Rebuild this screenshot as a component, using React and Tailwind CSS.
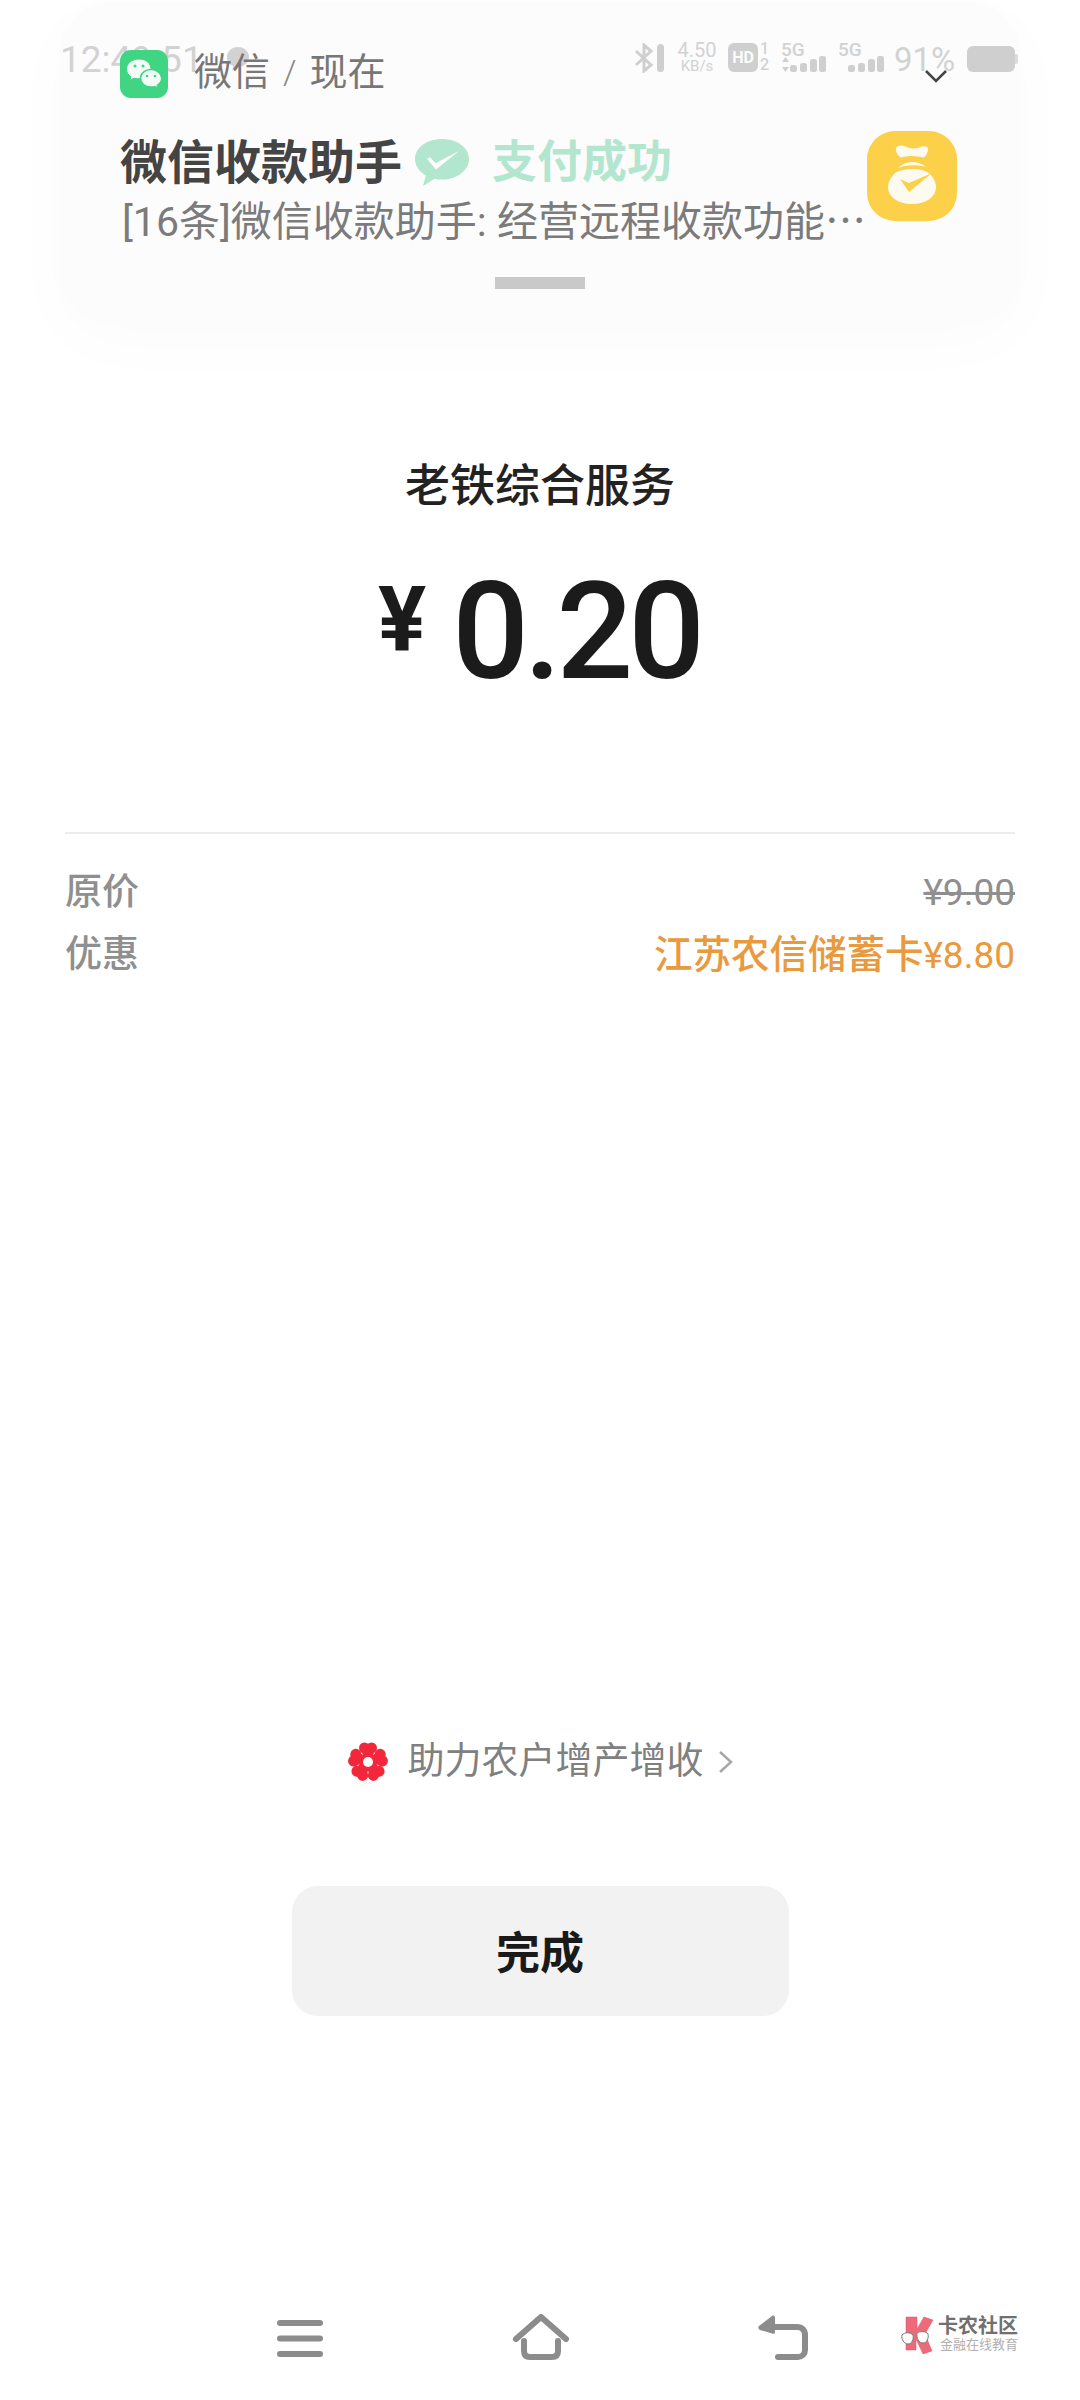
const CJK = "font-['Roboto','Noto_Sans_CJK_SC',sans-serif]";

function WeChatBadge() {
  return (
    <svg width="48" height="48" viewBox="0 0 48 48" className="shrink-0">
      <rect width="48" height="48" rx="11" fill="#3fd583" />
      <path d="M19 9c-7 0-12.500 4.300-12.500 10 0 3.200 1.700 5.900 4.400 7.800l-1 3.600 4.200-2.200c1.500.4 3 .6 4.900.6C26 29 31 24.600 31 19c0-5.700-5-10-12-10z" fill="#f2fbf6" stroke="#3fd583" strokeWidth="1" />
      <path d="M31 19.500c-6 0-10.500 3.900-10.500 8.800 0 4.900 4.500 8.800 10.500 8.800 1.400 0 2.600-.2 3.800-.6l3.500 1.900-.9-3.100c2.700-1.700 4.300-4.200 4.300-7 0-4.900-4.700-8.800-10.700-8.800z" fill="#f2fbf6" stroke="#3fd583" strokeWidth="1.500" />
      <circle cx="15" cy="16" r="1.500" fill="#3fd583" />
      <circle cx="23" cy="16" r="1.500" fill="#3fd583" />
      <circle cx="27" cy="26" r="1.300" fill="#3fd583" />
      <circle cx="35" cy="26" r="1.300" fill="#3fd583" />
    </svg>
  );
}

function PayMark() {
  return (
    <svg width="56" height="50" viewBox="0 0 56 50" className="shrink-0">
      <path d="M28 1C13 1 1 9.700 1 21c0 6.800 4.300 12.700 10.900 16.400L9 48l11.500-7.300c2.400.6 4.900.9 7.500.9 15 0 27-9.200 27-20.600S43 1 28 1z" fill="#b2e6cf" />
      <path d="M13 21l3-1.800 5.500 6L45 13 22 31.500z" fill="#fdfdfd" />
    </svg>
  );
}

function BagIcon() {
  return (
    <svg width="90" height="90" viewBox="0 0 90 90" className="shrink-0">
      <rect width="90" height="90" rx="28" fill="#fdd049" />
      <path d="M29 17c2-3 6-3 9-1.500 3 1.300 6 2 8 2 3 0 6-1 9-2 4-1 6 0 6 3 0 3-2 6-4 8-8-2-16-2-23 0-3-2-6-6-5-9.500z" fill="#fdfaf0" />
      <path d="M31 37c4-4 9-6 14-6 5 0 10 1.500 14 5-8-2.500-20-2.500-28 1z" fill="#fdfaf0" />
      <path d="M28 42c5-3 11-4 17-4 7 0 13 1 18 5 4 4 6 9 6 13 0 10-10 17-24 17S21 66 21 56c0-5 3-10 7-14z" fill="#fdfaf0" />
      <path d="M33 48l9 4 23-10-23 19z" fill="#fdd049" />
    </svg>
  );
}

function Flower() {
  const petals = [0, 72, 144, 216, 288];
  return (
    <svg width="42" height="42" viewBox="0 0 42 42" className="shrink-0">
      {petals.map((a) => (
        <g key={a} transform={`rotate(${a} 21 21)`}>
          <circle cx="17.500" cy="7" r="5.500" fill="#f2273c" />
          <circle cx="24.500" cy="7" r="5.500" fill="#f2273c" />
          <path d="M14 9h14l-4 10h-6z" fill="#f2273c" />
        </g>
      ))}
      <circle cx="21" cy="21" r="9" fill="#f2273c" />
      <circle cx="21" cy="21" r="5" fill="#ffffff" />
    </svg>
  );
}

function Signal({ className }) {
  return (
    <svg width="36" height="16" viewBox="0 0 36 16" className={className}>
      <rect x="0" y="9" width="7" height="7" rx="2.500" fill="#cfcfcf" />
      <rect x="10" y="7" width="7" height="9" rx="2.500" fill="#cfcfcf" />
      <rect x="20" y="3" width="7" height="13" rx="2.500" fill="#cfcfcf" />
      <rect x="29" y="0" width="7" height="16" rx="2.500" fill="#cfcfcf" />
    </svg>
  );
}

function StatusBar() {
  return (
    <div className="absolute left-0 right-0 top-[40px] h-[36px] flex items-center text-[#d2d2d2] font-['Roboto',sans-serif]">
      <span className="absolute left-0 top-[-4px] text-[37px] leading-[44px]">12:49:51</span>
      <svg width="24" height="26" viewBox="0 0 24 26" className="absolute left-[166px] top-[4px]">
        <path d="M12 1C5.500 1 1 5.500 1 11s3.500 8 6 9l-.5 5 5-4c6.500 0 11.500-4.500 11.500-10S18.500 1 12 1z" fill="#d2d2d2" />
      </svg>
      <svg width="34" height="30" viewBox="0 0 34 30" className="absolute left-[573px] top-[1px]">
        <path d="M3 8l15 14-7 6V2l7 6L3 22" stroke="#cfcfcf" strokeWidth="3" fill="none" />
        <rect x="24" y="1" width="7" height="28" rx="3.500" fill="#cfcfcf" />
      </svg>
      <div className="absolute left-[616px] top-[0px] w-[42px] flex flex-col items-center">
        <span className="text-[20px] leading-[17px]">4.50</span>
        <span className="text-[15px] leading-[15px]">KB/s</span>
      </div>
      <div className="absolute left-[668px] top-[1px] w-[30px] h-[29px] rounded-[6px] bg-[#cfcfcf] flex items-center justify-center text-[#fcfcfc] text-[16px] font-bold leading-none">HD</div>
      <div className="absolute left-[700px] top-[-1px] flex flex-col items-center text-[16px] leading-[16px] font-medium">
        <span>1</span>
        <span>2</span>
      </div>
      <span className="absolute left-[721px] top-[-1px] text-[19px] leading-[18px] font-medium">5G</span>
      <svg width="7" height="15" viewBox="0 0 7 15" className="absolute left-[722px] top-[15px]">
        <path d="M3.500 0L7 5H0zM0 10h7l-3.500 5z" fill="#cfcfcf" />
      </svg>
      <Signal className="absolute left-[730px] top-[14px]" />
      <span className="absolute left-[778px] top-[-1px] text-[19px] leading-[18px] font-medium">5G</span>
      <Signal className="absolute left-[788px] top-[14px]" />
      <span className="absolute left-[834px] top-[-1px] text-[33px] leading-[38px]">91%</span>
      <div className="absolute left-[907px] top-[4px] w-[48px] h-[26px] rounded-[6px] bg-[#cfcfcf]" />
      <div className="absolute left-[955px] top-[12px] w-[3px] h-[10px] rounded-r-[2px] bg-[#dcdcdc]" />
    </div>
  );
}

function NotificationCard() {
  return (
    <div className="absolute left-[60px] top-[2px] w-[960px] h-[323px] rounded-[52px] bg-[#fcfcfc] shadow-[0_16px_70px_rgba(0,0,0,0.02)]">
      <StatusBar />
      <div className="relative pt-[48px] pl-[60px]">
        <div className="flex items-center h-[48px] text-[#777777]">
          <WeChatBadge />
          <span className="ml-[26px] text-[38px] leading-[44px] mb-[4px]">微信</span>
          <span className="mx-[13px] text-[34px] leading-[44px] font-light text-[#888888] mb-[4px]">/</span>
          <span className="text-[38px] leading-[44px] mb-[4px]">现在</span>
          <svg width="24" height="15" viewBox="0 0 24 15" className="absolute left-[864px] top-[67px]">
            <path d="M2 2l10 10L22 2" stroke="#444444" strokeWidth="2.500" fill="none" />
          </svg>
        </div>
        <div className="flex mt-[37px]">
          <div className="w-[745px]">
            <div className="flex items-center h-[56px]">
              <span className="text-[47px] leading-[56px] font-bold text-[#444444] w-[294px]">微信收款助手</span>
              <PayMark />
              <span className="ml-[22px] text-[45px] leading-[56px] font-bold text-[#b2e6cf]">支付成功</span>
            </div>
            <div className="mt-[6px] ml-[2px] text-[41px] leading-[50px] text-[#7b7b7b] whitespace-nowrap">[16条]微信收款助手: 经营远程收款功能⋯</div>
          </div>
          <div className="mt-[-4px] ml-[2px]">
            <BagIcon />
          </div>
        </div>
      </div>
      <div className="absolute left-[435px] top-[275px] w-[90px] h-[12px] bg-[#c9c9c9]" />
    </div>
  );
}

function NavBar() {
  return (
    <div className="relative h-[86px]">
      <svg width="46" height="38" viewBox="0 0 46 38" className="absolute left-[277px] top-[5px]">
        <path d="M3 3h40M3 18.500h40M3 34h40" stroke="#8c8c8c" strokeWidth="6" strokeLinecap="round" />
      </svg>
      <svg width="58" height="46" viewBox="0 0 58 46" className="absolute left-[512px] top-[-1px]">
        <path d="M4 25L29 3l25 22" stroke="#8c8c8c" strokeWidth="6" strokeLinecap="round" strokeLinejoin="round" fill="none" />
        <path d="M12 27v10c0 4 2 6 6 6h22c4 0 6-2 6-6V27" stroke="#8c8c8c" strokeWidth="6" strokeLinecap="round" fill="none" />
      </svg>
      <svg width="52" height="46" viewBox="0 0 52 46" className="absolute left-[757px] top-[0px]">
        <path d="M16 12h24c5 0 8 3 8 8v15c0 4-3 7-7 7H21" stroke="#8c8c8c" strokeWidth="6" strokeLinecap="round" fill="none" />
        <path d="M2 11L15 1c2-1 3 0 3 2v14c0 2-1 2-3 1.500L3 15c-2-1-2-3-1-4z" fill="#8c8c8c" />
      </svg>
      <svg width="36" height="38" viewBox="0 0 36 38" className="absolute left-[900px] top-[1px]">
        <path d="M6 1h11v12l7-12 9 3-8 14 7 17-9 3-7-15v11H6z" fill="#ee6a7a" stroke="#d85868" strokeWidth="0.500" />
        <path d="M2 19c3-3 8-3 11 0 1 4-1 9-5 9s-7-5-6-9z" fill="#ffffff" stroke="#777777" strokeWidth="1" />
        <path d="M17 17c3-2 9-2 11 1 1 4-1 9-5 9s-7-5-6-10z" fill="#ffffff" stroke="#777777" strokeWidth="1" />
      </svg>
      <div className="absolute left-[938px] top-[0px] flex flex-col">
        <span className="text-[20px] leading-[22px] font-bold text-[#707070]">卡农社区</span>
        <span className="text-[13px] leading-[16px] text-[#b0b0b0] ml-[2px]">金融在线教育</span>
      </div>
    </div>
  );
}

export default function App() {
  return (
    <div className={`relative w-[1080px] h-[2400px] bg-white overflow-hidden ${CJK}`}>
      <NotificationCard />

      <div className="pt-[459px] text-center text-[45px] leading-[56px] font-medium text-[#222222]">老铁综合服务</div>

      <div className="mt-[47px] h-[140px] flex items-center justify-center text-[#1b1b1b] font-['Roboto',sans-serif]">
        <span className="text-[90px] leading-[140px] font-bold mb-[22px] mr-[26px] ml-[-2px]">¥</span>
        <span className="text-[135px] leading-[140px] font-medium tracking-[-5px]">0.20</span>
      </div>

      <div className="mt-[130px] mx-[65px] h-[2px] bg-[#ececec]" />

      <div className="mt-[28px] mx-[65px] flex flex-col text-[37px] leading-[62px]">
        <div className="flex justify-between h-[62px]">
          <span className="text-[#8f8f8f] font-medium">原价</span>
          <span className="text-[#8f8f8f] line-through">¥9.00</span>
        </div>
        <div className="flex justify-between h-[62px]">
          <span className="text-[#8f8f8f] font-medium">优惠</span>
          <span className="text-[#ea9a3e]"><span className="text-[38.500px] font-medium">江苏农信储蓄卡</span>¥8.80</span>
        </div>
      </div>

      <div className="mt-[754px] h-[44px] flex items-center justify-center">
        <Flower />
        <span className="ml-[19px] text-[37px] leading-[44px] text-[#808080]">助力农户增产增收</span>
        <svg width="16" height="24" viewBox="0 0 16 24" className="ml-[14px]">
          <path d="M2 2l11 10L2 22" stroke="#a8a8a8" strokeWidth="2.500" fill="none" />
        </svg>
      </div>

      <button className="mt-[102px] mx-auto w-[497px] h-[130px] pt-[5px] rounded-[26px] bg-[#f2f2f2] flex items-center justify-center text-[44px] font-bold text-[#1a1a1a]">完成</button>

      <div className="mt-[299px]">
        <NavBar />
      </div>
    </div>
  );
}
